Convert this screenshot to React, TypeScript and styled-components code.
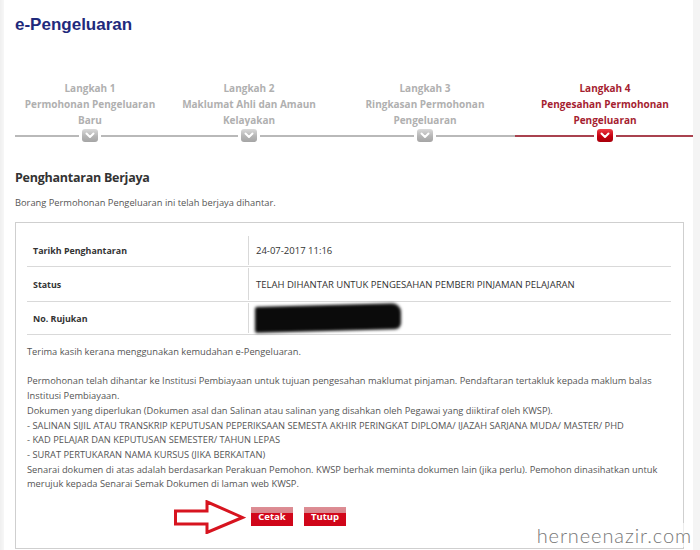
import React from 'react';
import styled, {createGlobalStyle} from 'styled-components';

const GlobalStyle = createGlobalStyle`
  html, body {
    margin: 0;
    padding: 0;
  }
  body {
    background: linear-gradient(to right, #efefef 0, #f7f7f7 4px, #f4f4f4 100%);
    font-family: "Open Sans", "Noto Sans", sans-serif;
  }
`;

const Page = styled.div`
  position: relative;
  box-sizing: border-box;
  width: 689px;
  height: 550px;
  margin-left: 4px;
  padding: 13px 0 0 11px;
  background: #fff;
  overflow: hidden;
`;

const Title = styled.h1`
  margin: 0;
  font-family: "Liberation Sans", Arial, sans-serif;
  font-size: 17px;
  line-height: 24px;
  font-weight: 700;
  color: #1f2a7c;
`;

const Stepper = styled.div`
  display: flex;
  width: 678px;
  margin-top: 43px;
  background-image: linear-gradient(to right, #b9b9b9 0, #b9b9b9 500px, #a9424f 500px, #a9424f 100%);
  background-repeat: no-repeat;
  background-size: 100% 2px;
  background-position: 0 55px;
`;

const Step = styled.div<{ $width: number }>`
  width: ${p => p.$width}px;
  display: flex;
  flex-direction: column;
  align-items: center;
`;

const StepLabel = styled.div<{ $active?: boolean }>`
  font-size: 10px;
  line-height: 16px;
  font-weight: 700;
  text-align: center;
  white-space: nowrap;
  color: ${p => p.$active ? '#a51e31' : '#b0b0b0'};
`;

const StepIcon = styled.div<{ $active?: boolean }>`
  width: 16px;
  height: 13px;
  margin-top: 1px;
  border-radius: 3px;
  box-shadow: 0 0 0 3px #fff;
  display: flex;
  align-items: center;
  justify-content: center;
  background: ${p => p.$active
    ? 'linear-gradient(#ef3b45, #c5000f 55%, #a8000c)'
    : 'linear-gradient(#dadada, #b6b6b6 55%, #a5a5a5)'};
`;

const Heading = styled.h2`
  margin: 27px 0 0;
  font-size: 12.5px;
  line-height: 18px;
  font-weight: 700;
  letter-spacing: -0.25px;
  color: #333;
`;

const Intro = styled.p`
  margin: 8px 0 0;
  font-size: 9.3px;
  line-height: 16px;
  color: #555;
`;

const Box = styled.div`
  box-sizing: border-box;
  width: 669px;
  height: 327px;
  margin-top: 11px;
  padding: 12px 11px 0;
  border: 1px solid #cfcfcf;
`;

const Table = styled.div`
  width: 644px;
`;

const Row = styled.div<{ $height: number }>`
  display: grid;
  grid-template-columns: 221px 1fr;
  height: ${p => p.$height}px;
  border-bottom: 1px solid #d9d9d9;
`;

const Label = styled.div`
  display: flex;
  align-items: center;
  padding-left: 6px;
  font-size: 8.9px;
  font-weight: 700;
  color: #333;
`;

const Value = styled.div`
  display: flex;
  align-items: center;
  margin: 1px 0;
  padding-left: 7px;
  border-left: 1px solid #d9d9d9;
  font-size: 9.5px;
  color: #333;
`;

const Redacted = styled.div`
  width: 146px;
  height: 26px;
  margin-left: -1px;
  background: #0b0b0b;
  border-radius: 2px 9px 6px 2px;
  filter: blur(1.4px);
  transform: skewY(-1.5deg);
`;

const Notes = styled.div`
  margin-top: 10px;
  font-size: 9.3px;
  line-height: 14.7px;
  color: #555;
  white-space: nowrap;

  p {
    margin: 0 0 14.7px;
  }
`;

const Actions = styled.div`
  display: flex;
  align-items: center;
  gap: 5px;
  margin-top: -7px;
  padding-left: 147px;
`;

const Buttons = styled.div`
  display: flex;
  gap: 11px;
`;

const Button = styled.button`
  width: 42px;
  height: 19px;
  padding: 0;
  border: none;
  font-family: "Open Sans", "Noto Sans", sans-serif;
  font-size: 9.5px;
  font-weight: 700;
  color: #fff;
  cursor: pointer;
  background: linear-gradient(#dd8e95 0, #d9858c 32%, #d3071b 32%, #cf0519 100%);
`;

const Watermark = styled.div`
  position: absolute;
  right: 1px;
  bottom: 3px;
  font-family: Lato, "Open Sans", sans-serif;
  font-weight: 300;
  font-size: 20px;
  letter-spacing: 0.9px;
  color: #777;
  text-shadow: 0 0 3px #fff, 0 0 3px #fff;
  background: rgba(255, 255, 255, 0.6);
`;

const steps = [
  { width: 150, lines: ['Langkah 1', 'Permohonan Pengeluaran', 'Baru'] },
  { width: 168, lines: ['Langkah 2', 'Maklumat Ahli dan Amaun', 'Kelayakan'] },
  { width: 184, lines: ['Langkah 3', 'Ringkasan Permohonan', 'Pengeluaran'] },
  { width: 176, lines: ['Langkah 4', 'Pengesahan Permohonan', 'Pengeluaran'], active: true },
];

const Chevron = () => (
  <svg width="10" height="7" viewBox="0 0 10 7">
    <path d="M1.5 1.5 L5 5 L8.5 1.5" fill="none" stroke="#fff" strokeWidth="2" strokeLinecap="round" strokeLinejoin="round"/>
  </svg>
);

const Arrow = () => (
  <svg width="72" height="34" viewBox="0 0 72 34">
    <path
      d="M1.5 11 H33 V1.8 L68.5 17.5 L33 32.5 V24 H1.5 Z"
      fill="#fff"
      stroke="#d7141f"
      strokeWidth="3"
      strokeLinejoin="miter"
    />
  </svg>
);

const App = () => {
  return (
    <Page>
      <GlobalStyle/>
      <Title>e-Pengeluaran</Title>

      <Stepper>
        {steps.map(step => (
          <Step key={step.lines[0]} $width={step.width}>
            {step.lines.map(line => (
              <StepLabel key={line} $active={step.active}>{line}</StepLabel>
            ))}
            <StepIcon $active={step.active}><Chevron/></StepIcon>
          </Step>
        ))}
      </Stepper>

      <Heading>Penghantaran Berjaya</Heading>
      <Intro>Borang Permohonan Pengeluaran ini telah berjaya dihantar.</Intro>

      <Box>
        <Table>
          <Row $height={31}>
            <Label>Tarikh Penghantaran</Label>
            <Value>24-07-2017 11:16</Value>
          </Row>
          <Row $height={34}>
            <Label>Status</Label>
            <Value>TELAH DIHANTAR UNTUK PENGESAHAN PEMBERI PINJAMAN PELAJARAN</Value>
          </Row>
          <Row $height={32}>
            <Label>No. Rujukan</Label>
            <Value><Redacted/></Value>
          </Row>
        </Table>

        <Notes>
          <p>Terima kasih kerana menggunakan kemudahan e-Pengeluaran.</p>
          <p>
            Permohonan telah dihantar ke Institusi Pembiayaan untuk tujuan pengesahan maklumat pinjaman. Pendaftaran tertakluk kepada maklum balas<br/>
            Institusi Pembiayaan.<br/>
            Dokumen yang diperlukan (Dokumen asal dan Salinan atau salinan yang disahkan oleh Pegawai yang diiktiraf oleh KWSP).<br/>
            - SALINAN SIJIL ATAU TRANSKRIP KEPUTUSAN PEPERIKSAAN SEMESTA AKHIR PERINGKAT DIPLOMA/ IJAZAH SARJANA MUDA/ MASTER/ PHD<br/>
            - KAD PELAJAR DAN KEPUTUSAN SEMESTER/ TAHUN LEPAS<br/>
            - SURAT PERTUKARAN NAMA KURSUS (JIKA BERKAITAN)<br/>
            Senarai dokumen di atas adalah berdasarkan Perakuan Pemohon. KWSP berhak meminta dokumen lain (jika perlu). Pemohon dinasihatkan untuk<br/>
            merujuk kepada Senarai Semak Dokumen di laman web KWSP.
          </p>
        </Notes>

        <Actions>
          <Arrow/>
          <Buttons>
            <Button>Cetak</Button>
            <Button>Tutup</Button>
          </Buttons>
        </Actions>
      </Box>

      <Watermark>herneenazir.com</Watermark>
    </Page>
  );
};

export default App;
